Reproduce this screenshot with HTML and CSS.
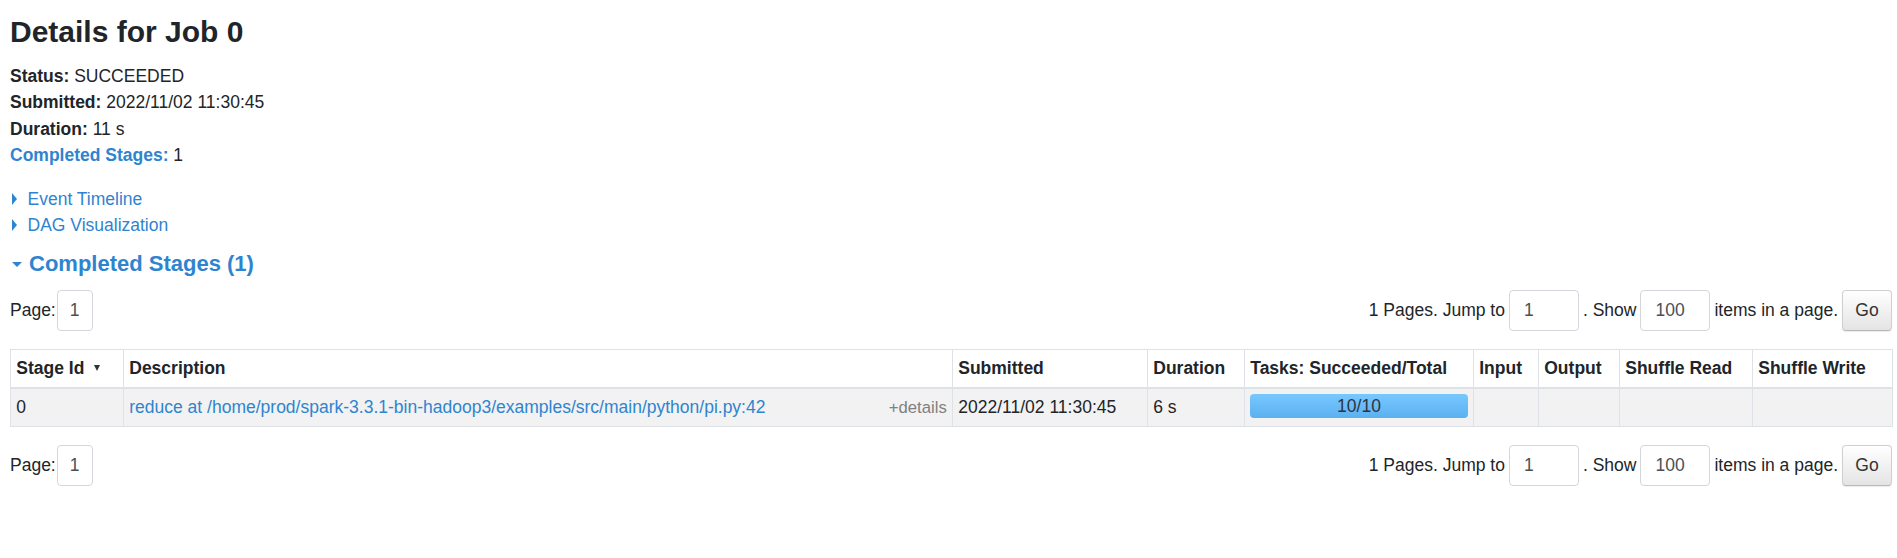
FILE: index.html
```html
<!DOCTYPE html>
<html lang="en">
<head>
<meta charset="utf-8">
<title>Details for Job 0</title>
<link rel="stylesheet" href="styles.css">
</head>
<body>
<div class="container">
  <h3 class="title">Details for Job 0</h3>
  <ul class="summary">
    <li><strong>Status:</strong> SUCCEEDED</li>
    <li><strong>Submitted:</strong> 2022/11/02 11:30:45</li>
    <li><strong>Duration:</strong> 11 s</li>
    <li><a class="link" href="#completed"><strong>Completed Stages:</strong></a> 1</li>
  </ul>
  <div class="toggles">
    <a class="toggle link" href="#"><span class="arrow-closed"></span>Event Timeline</a>
    <a class="toggle link" href="#"><span class="arrow-closed"></span>DAG Visualization</a>
  </div>
  <h4 class="section link" id="completed"><span class="arrow-open"></span>Completed Stages (1)</h4>

  <div class="pager">
    <div class="pager-left"><span>Page:</span><span class="field field-page">1</span></div>
    <div class="pager-right">
      <span>1 Pages. Jump to</span>
      <span class="field field-wide">1</span>
      <span>. Show</span>
      <span class="field field-wide">100</span>
      <span>items in a page.</span>
      <span class="btn">Go</span>
    </div>
  </div>

  <table class="stages">
    <colgroup>
      <col class="c-id"><col class="c-desc"><col class="c-sub"><col class="c-dur"><col class="c-tasks"><col class="c-in"><col class="c-out"><col class="c-sr"><col class="c-sw">
    </colgroup>
    <thead>
      <tr>
        <th>Stage Id <span class="sort-arrow"></span></th>
        <th>Description</th>
        <th>Submitted</th>
        <th>Duration</th>
        <th>Tasks: Succeeded/Total</th>
        <th>Input</th>
        <th>Output</th>
        <th>Shuffle Read</th>
        <th>Shuffle Write</th>
      </tr>
    </thead>
    <tbody>
      <tr>
        <td>0</td>
        <td><div class="desc"><a class="link" href="#">reduce at /home/prod/spark-3.3.1-bin-hadoop3/examples/src/main/python/pi.py:42</a><span class="details">+details</span></div></td>
        <td>2022/11/02 11:30:45</td>
        <td>6 s</td>
        <td><div class="progress"><span class="progress-text">10/10</span></div></td>
        <td></td>
        <td></td>
        <td></td>
        <td></td>
      </tr>
    </tbody>
  </table>

  <div class="pager pager-bottom">
    <div class="pager-left"><span>Page:</span><span class="field field-page">1</span></div>
    <div class="pager-right">
      <span>1 Pages. Jump to</span>
      <span class="field field-wide">1</span>
      <span>. Show</span>
      <span class="field field-wide">100</span>
      <span>items in a page.</span>
      <span class="btn">Go</span>
    </div>
  </div>
</div>
</body>
</html>
```

FILE: styles.css
```css
* {
  box-sizing: border-box;
}

body {
  margin: 0;
  background: #ffffff;
  color: #212529;
  font-family: "Liberation Sans", Arial, sans-serif;
  font-size: 17.5px;
  line-height: 26.25px;
}

.container {
  padding: 14px 5px 40px 10px;
}

.link {
  color: #2f84d0;
  text-decoration: none;
}

.title {
  margin: 0;
  font-size: 30px;
  line-height: 36px;
  font-weight: 700;
}

.summary {
  list-style: none;
  margin: 13px 0 0;
  padding: 0;
}

.summary strong {
  font-weight: 700;
}

.toggles {
  margin-top: 18px;
  display: flex;
  flex-direction: column;
  align-items: flex-start;
}

.toggle {
  display: flex;
  align-items: center;
}

.arrow-closed {
  width: 0;
  height: 0;
  border-top: 6px solid transparent;
  border-bottom: 6px solid transparent;
  border-left: 5.5px solid #2f84d0;
  margin: 0 10.5px 0 2px;
}

.section {
  margin: 12.5px 0 0;
  font-size: 22px;
  line-height: 26.4px;
  font-weight: 700;
  display: flex;
  align-items: center;
}

.arrow-open {
  width: 0;
  height: 0;
  border-left: 5px solid transparent;
  border-right: 5px solid transparent;
  border-top: 5.5px solid #2f84d0;
  margin: 1px 7px 0 2px;
}

.pager {
  margin-top: 12.5px;
  height: 41px;
  display: flex;
  justify-content: space-between;
  align-items: center;
}

.pager-bottom {
  margin-top: 17.5px;
}

.pager-left {
  display: flex;
  align-items: center;
  gap: 1px;
}

.pager-right {
  display: flex;
  align-items: center;
  gap: 4px;
}

.field {
  display: inline-block;
  height: 41px;
  border: 1px solid #d3d7dc;
  border-radius: 4px;
  line-height: 39px;
  color: #495057;
  background: #fff;
}

.field-page {
  width: 36px;
  text-align: center;
}

.field-wide {
  width: 70px;
  padding-left: 14px;
}

.btn {
  display: inline-block;
  width: 50px;
  height: 41px;
  line-height: 39px;
  text-align: center;
  color: #333;
  border: 1px solid #cfcfcf;
  border-bottom-color: #b8b8b8;
  border-radius: 4px;
  background: linear-gradient(to bottom, #ffffff 0%, #e4e4e4 100%);
  box-shadow: 0 1px 1px rgba(0, 0, 0, 0.08);
}

.stages {
  margin-top: 18px;
  width: 100%;
  border-collapse: collapse;
  table-layout: fixed;
}

.c-id { width: 113px; }
.c-desc { width: 829px; }
.c-sub { width: 195px; }
.c-dur { width: 97px; }
.c-tasks { width: 229px; }
.c-in { width: 65px; }
.c-out { width: 81px; }
.c-sr { width: 133px; }
.c-sw { width: 140px; }

.stages th,
.stages td {
  border: 1px solid #dee2e6;
  padding: 5.25px;
  text-align: left;
  vertical-align: top;
  white-space: nowrap;
}

.stages th {
  font-weight: 700;
  background: #ffffff;
}

.stages thead th {
  border-bottom: 2px solid #dee2e6;
}

.stages tbody tr {
  background: #f2f2f2;
}

.sort-arrow {
  display: inline-block;
  width: 0;
  height: 0;
  border-left: 3.5px solid transparent;
  border-right: 3.5px solid transparent;
  border-top: 6px solid #333;
  margin-left: 5px;
  vertical-align: 3px;
}

.desc {
  display: flex;
  justify-content: space-between;
  align-items: baseline;
}

.details {
  color: #808080;
  font-size: 16.7px;
}

.progress {
  height: 24px;
  border-radius: 4px;
  background: linear-gradient(to bottom, #78c8ff 0%, #5cb0f0 100%);
  text-align: center;
  line-height: 24px;
}

.progress-text {
  color: #2b3440;
}
```
